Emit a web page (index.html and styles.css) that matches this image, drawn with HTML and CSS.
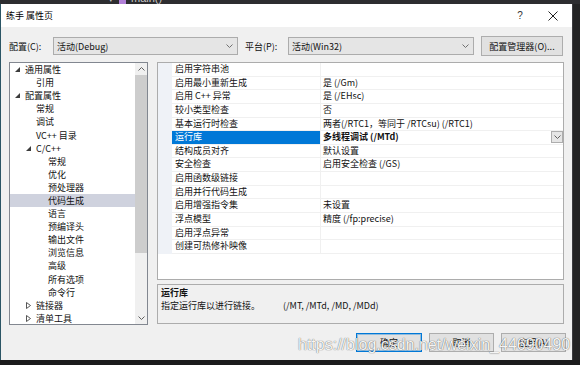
FILE: index.html
```html
<!DOCTYPE html>
<html lang="zh-CN">
<head>
<meta charset="utf-8">
<title>练手 属性页</title>
<link rel="stylesheet" href="styles.css">
</head>
<body>
<div class="screen">
  <div class="topstrip">
    <span class="ts-arrow">▾</span><span class="ts-icon"></span><span class="ts-text">main()</span>
  </div>
  <div class="stage">
    <div class="win">
      <div class="titlebar">
        <span class="title">练手 属性页</span>
        <span class="tb-help">?</span>
        <span class="tb-close"><svg width="10" height="10" viewBox="0 0 10 10"><path d="M0.5 0.5 L9.5 9.5 M9.5 0.5 L0.5 9.5" stroke="#222" stroke-width="1" fill="none"/></svg></span>
      </div>
      <div class="body">
        <div class="cfg">
          <span class="lbl lbl-cfg">配置(C):</span>
          <div class="combo combo-cfg"><span class="combo-text">活动(Debug)</span><svg class="chev" width="7" height="4" viewBox="0 0 7 4"><path d="M0.5 0.5 L3.5 3.5 L6.5 0.5" stroke="#707070" fill="none"/></svg></div>
          <span class="lbl lbl-plat">平台(P):</span>
          <div class="combo combo-plat"><span class="combo-text">活动(Win32)</span><svg class="chev" width="7" height="4" viewBox="0 0 7 4"><path d="M0.5 0.5 L3.5 3.5 L6.5 0.5" stroke="#707070" fill="none"/></svg></div>
          <button class="btn btn-mgr">配置管理器(O)...</button>
        </div>
        <div class="main">
          <div class="tree">
            <div class="tree-list">
              <div class="ti l0"><span class="tw"><svg width="5" height="5" viewBox="0 0 5 5"><path d="M5 0 L5 5 L0 5 Z" fill="#3c3c3c"/></svg></span>通用属性</div>
              <div class="ti l1"><span class="tw"></span>引用</div>
              <div class="ti l0"><span class="tw"><svg width="5" height="5" viewBox="0 0 5 5"><path d="M5 0 L5 5 L0 5 Z" fill="#3c3c3c"/></svg></span>配置属性</div>
              <div class="ti l1"><span class="tw"></span>常规</div>
              <div class="ti l1"><span class="tw"></span>调试</div>
              <div class="ti l1"><span class="tw"></span>VC++ 目录</div>
              <div class="ti l1"><span class="tw"><svg width="5" height="5" viewBox="0 0 5 5"><path d="M5 0 L5 5 L0 5 Z" fill="#3c3c3c"/></svg></span>C/C++</div>
              <div class="ti l2"><span class="tw"></span>常规</div>
              <div class="ti l2"><span class="tw"></span>优化</div>
              <div class="ti l2"><span class="tw"></span>预处理器</div>
              <div class="ti l2 sel"><span class="tw"></span>代码生成</div>
              <div class="ti l2"><span class="tw"></span>语言</div>
              <div class="ti l2"><span class="tw"></span>预编译头</div>
              <div class="ti l2"><span class="tw"></span>输出文件</div>
              <div class="ti l2"><span class="tw"></span>浏览信息</div>
              <div class="ti l2"><span class="tw"></span>高级</div>
              <div class="ti l2"><span class="tw"></span>所有选项</div>
              <div class="ti l2"><span class="tw"></span>命令行</div>
              <div class="ti l1"><span class="tw"><svg width="5" height="7" viewBox="0 0 5 7"><path d="M0.5 0.5 L4.5 3.5 L0.5 6.5 Z" fill="none" stroke="#444" stroke-width="0.9"/></svg></span>链接器</div>
              <div class="ti l1"><span class="tw"><svg width="5" height="7" viewBox="0 0 5 7"><path d="M0.5 0.5 L4.5 3.5 L0.5 6.5 Z" fill="none" stroke="#444" stroke-width="0.9"/></svg></span>清单工具</div>
            </div>
            <div class="vscroll">
              <div class="arr"><svg width="7" height="4" viewBox="0 0 7 4"><path d="M0.5 3.5 L3.5 0.5 L6.5 3.5" stroke="#606060" fill="none"/></svg></div>
              <div class="track"><div class="thumb"></div></div>
              <div class="arr"><svg width="7" height="4" viewBox="0 0 7 4"><path d="M0.5 0.5 L3.5 3.5 L6.5 0.5" stroke="#606060" fill="none"/></svg></div>
            </div>
          </div>
          <div class="rightcol">
            <div class="grid">
              <div class="row"><span class="gut"></span><span class="nm">启用字符串池</span><span class="val"></span></div>
              <div class="row"><span class="gut"></span><span class="nm">启用最小重新生成</span><span class="val">是 (/Gm)</span></div>
              <div class="row"><span class="gut"></span><span class="nm">启用 C++ 异常</span><span class="val">是 (/EHsc)</span></div>
              <div class="row"><span class="gut"></span><span class="nm">较小类型检查</span><span class="val">否</span></div>
              <div class="row"><span class="gut"></span><span class="nm">基本运行时检查</span><span class="val">两者(/RTC1，等同于 /RTCsu) (/RTC1)</span></div>
              <div class="row sel"><span class="gut"></span><span class="nm">运行库</span><span class="val"><b>多线程调试 (/MTd)</b><span class="dd"><svg width="7" height="4" viewBox="0 0 7 4"><path d="M0.5 0.5 L3.5 3.5 L6.5 0.5" stroke="#606060" fill="none"/></svg></span></span></div>
              <div class="row"><span class="gut"></span><span class="nm">结构成员对齐</span><span class="val">默认设置</span></div>
              <div class="row"><span class="gut"></span><span class="nm">安全检查</span><span class="val">启用安全检查 (/GS)</span></div>
              <div class="row"><span class="gut"></span><span class="nm">启用函数级链接</span><span class="val"></span></div>
              <div class="row"><span class="gut"></span><span class="nm">启用并行代码生成</span><span class="val"></span></div>
              <div class="row"><span class="gut"></span><span class="nm">启用增强指令集</span><span class="val">未设置</span></div>
              <div class="row"><span class="gut"></span><span class="nm">浮点模型</span><span class="val">精度 (/fp:precise)</span></div>
              <div class="row"><span class="gut"></span><span class="nm">启用浮点异常</span><span class="val"></span></div>
              <div class="row"><span class="gut"></span><span class="nm">创建可热修补映像</span><span class="val"></span></div>
            </div>
            <div class="desc">
              <div class="desc-title">运行库</div>
              <div class="desc-text"><span class="desc-main">指定运行库以进行链接。</span><span>(/MT, /MTd, /MD, /MDd)</span></div>
            </div>
          </div>
        </div>
        <div class="actions">
          <button class="btn btn-ok">确定</button>
          <button class="btn btn-act">取消</button>
          <button class="btn btn-act">应用(A)</button>
        </div>
      </div>
    </div>
    <div class="side"></div>
  </div>
  <div class="bottomstrip"></div>
  <div class="watermark">https://blog.csdn.net/weixin_44690490</div>
</div>
</body>
</html>
```
FILE: styles.css
```css
* { box-sizing: border-box; margin: 0; padding: 0; }
html, body { width: 580px; height: 365px; overflow: hidden; background: #1e1e1e; }
body {
  font-family: "Noto Sans CJK SC", "Microsoft YaHei", sans-serif;
  font-size: 9px;
  line-height: 13px;
  color: #111;
}
.screen { position: relative; width: 580px; height: 365px; display: flex; flex-direction: column; }

.topstrip {
  height: 4px; background: #2d2d30; overflow: hidden;
  display: flex; align-items: flex-end; padding-left: 108px; gap: 5px;
  color: #c8c8c8; font-family: "Liberation Sans", sans-serif; font-size: 11px; line-height: 11px;
}
.ts-icon { width: 7px; height: 9px; background: #b180d7; flex: none; }
.ts-text { line-height: 12px; }

.stage { height: 356px; display: flex; }
.win {
  width: 572px; display: flex; flex-direction: column;
  border-left: 1px solid #2b5565; background: #f0f0f0;
}
.side { flex: 1; background: #232324; border-left: 1px solid #3c3c40; }
.bottomstrip { flex: 1; background: #1b1b1c; }

.titlebar { height: 23px; background: #fff; display: flex; align-items: center; padding-left: 5px; }
.title { flex: 1; color: #000; }
.tb-help { width: 20px; text-align: center; font-family: "Liberation Sans", sans-serif; font-size: 10px; color: #333; }
.tb-close { width: 20px; margin-left: 13px; margin-right: 9px; display: flex; justify-content: center; }

.body { flex: 1; padding: 9px 0 0 8px; }

.cfg { height: 20px; display: flex; align-items: center; }
.lbl { flex: none; }
.lbl-cfg { width: 44px; }
.lbl-plat { width: 43px; margin-left: 7px; }
.combo {
  height: 18px; flex: none; display: flex; align-items: center;
  background: #e5e5e5; border: 1px solid #acacac; padding: 0 4px 0 3px;
}
.combo-cfg { width: 185px; }
.combo-plat { width: 186px; }
.combo-text { flex: 1; }
.btn {
  font-family: inherit; font-size: 9px; line-height: 13px; color: #111;
  background: #e1e1e1; border: 1px solid #adadad; flex: none;
}
.btn-mgr { width: 82px; height: 20px; margin-left: 7px; }

.main { height: 263px; margin-top: 6px; display: flex; gap: 9px; }

.tree { width: 139px; flex: none; border: 1px solid #828790; background: #fff; display: flex; }
.tree-list { flex: 1; }
.ti { height: 13.1px; line-height: 13px; display: flex; align-items: center; white-space: nowrap; }
.tw { width: 10px; flex: none; display: flex; align-items: center; }
.l0 { padding-left: 5px; }
.l1 { padding-left: 16px; }
.l2 { padding-left: 28px; }
.ti.sel { background: #cfd2de; }

.vscroll { width: 12px; flex: none; background: #f0f0f0; display: flex; flex-direction: column; }
.arr { height: 12px; display: flex; align-items: center; justify-content: center; }
.track { flex: 1; }
.thumb { height: 178px; background: #cdcdcd; }

.rightcol { width: 407px; flex: none; display: flex; flex-direction: column; gap: 4px; }
.grid { height: 218px; border: 1px solid #acacac; background: #fff; }
.row { height: 13.64px; display: flex; white-space: nowrap; }
.gut { width: 14px; flex: none; background: #eff2f7; }
.nm { width: 148px; flex: none; padding-left: 3px; border-bottom: 1px solid #f0f0f0; line-height: 12.6px; }
.val {
  flex: 1; display: flex; align-items: center; padding-left: 2px;
  border-left: 1px solid #f0f0f0; border-bottom: 1px solid #f0f0f0; line-height: 12.6px;
}
.row.sel .nm { background: #0078d7; color: #fff; }
.val b { font-weight: bold; flex: 1; }
.dd {
  width: 12px; height: 12px; flex: none; border: 1px solid #adadad; background: #e5e5e5;
  display: flex; align-items: center; justify-content: center;
}

.desc { height: 40px; border: 1px solid #acacac; background: #f0f0f0; padding: 1px 0 0 3px; }
.desc-title { font-weight: bold; }
.desc-main { display: inline-block; width: 122px; }

.actions { margin-top: 8px; padding-right: 6px; display: flex; justify-content: flex-end; gap: 7px; }
.actions .btn { height: 19px; width: 65px; }
.actions .btn-ok { width: 66px; border-color: #0078d7; box-shadow: inset 0 0 0 1px rgba(0, 120, 215, 0.35); }

.watermark {
  position: absolute; left: 298px; top: 336px;
  font-family: "Liberation Sans", Arial, sans-serif; font-size: 16px; line-height: 18px;
  color: rgba(255, 255, 255, 0.95);
  text-shadow: 0 0 1px rgba(0, 0, 0, 0.55), 0 0 1px rgba(0, 0, 0, 0.3);
  white-space: nowrap; pointer-events: none;
}
```
